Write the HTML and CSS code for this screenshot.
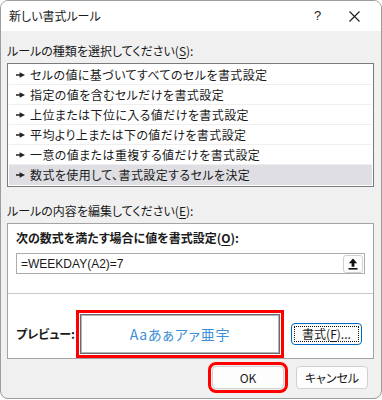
FILE: index.html
```html
<!DOCTYPE html>
<html lang="ja">
<head>
    <meta charset="UTF-8">
    <title>新しい書式ルール</title>
    <link rel="stylesheet" href="styles.css">
</head>
<body>
    <div class="dialog">
        <!-- Title bar -->
        <div class="titlebar">
            <span class="title">新しい書式ルール</span>
            <span class="help">?</span>
            <span class="close">
                <svg width="11" height="11" viewBox="0 0 11 11" fill="none" stroke="#1a1a1a" stroke-width="1.1">
                    <path d="M0.5 0.5l10 10M10.5 0.5l-10 10"/>
                </svg>
            </span>
        </div>

        <div class="dialog-body">
            <div class="label">ルールの種類を選択してください(<u>S</u>):</div>
            <ul class="rule-list">
                <li class="rule"><svg class="arrow" width="9" height="6" viewBox="0 0 9 6"><path d="M0 2.3h4v1.4H0z M3.6 0.2L9 3L3.6 5.8z"/></svg>セルの値に基づいてすべてのセルを書式設定</li>
                <li class="rule"><svg class="arrow" width="9" height="6" viewBox="0 0 9 6"><path d="M0 2.3h4v1.4H0z M3.6 0.2L9 3L3.6 5.8z"/></svg>指定の値を含むセルだけを書式設定</li>
                <li class="rule"><svg class="arrow" width="9" height="6" viewBox="0 0 9 6"><path d="M0 2.3h4v1.4H0z M3.6 0.2L9 3L3.6 5.8z"/></svg>上位または下位に入る値だけを書式設定</li>
                <li class="rule"><svg class="arrow" width="9" height="6" viewBox="0 0 9 6"><path d="M0 2.3h4v1.4H0z M3.6 0.2L9 3L3.6 5.8z"/></svg>平均より上または下の値だけを書式設定</li>
                <li class="rule"><svg class="arrow" width="9" height="6" viewBox="0 0 9 6"><path d="M0 2.3h4v1.4H0z M3.6 0.2L9 3L3.6 5.8z"/></svg>一意の値または重複する値だけを書式設定</li>
                <li class="rule selected"><svg class="arrow" width="9" height="6" viewBox="0 0 9 6"><path d="M0 2.3h4v1.4H0z M3.6 0.2L9 3L3.6 5.8z"/></svg>数式を使用して、書式設定するセルを決定</li>
            </ul>

            <div class="label label-second">ルールの内容を編集してください(<u>E</u>):</div>
            <div class="group">
                <div class="group-head">
                    <div class="bold-label">次の数式を満たす場合に値を書式設定(<u>O</u>):</div>
                    <div class="formula">
                        <span class="formula-text">=WEEKDAY(A2)=7</span>
                        <span class="ref-btn">
                            <svg width="10" height="12" viewBox="0 0 10 12">
                                <path d="M5 0.5L9.2 5.2H6.4V8.8H3.6V5.2H0.8Z" fill="#111"/>
                                <rect x="0.5" y="10" width="9" height="1.6" fill="#111"/>
                            </svg>
                        </span>
                    </div>
                </div>
                <div class="preview-row">
                    <span class="bold-label preview-label">プレビュー:</span>
                    <div class="preview marked">Aaあぁアァ亜宇</div>
                    <span class="btn btn-format"><span class="focus-rect">書式(<u>F</u>)...</span></span>
                </div>
            </div>

            <div class="actions">
                <span class="btn marked">OK</span>
                <span class="btn">キャンセル</span>
            </div>
        </div>
    </div>
</body>
</html>
```

FILE: styles.css
```css
* {
    margin: 0;
    padding: 0;
    box-sizing: border-box;
}

body {
    font-family: "Noto Sans CJK JP", "Noto Sans", sans-serif;
    font-size: 12px;
    line-height: 16px;
    color: #1a1a1a;
    background: #ffffff;
    font-feature-settings: "palt";
}

u {
    text-decoration-thickness: 1px;
    text-underline-offset: 2px;
}

.dialog {
    width: 382px;
    height: 399px;
    border: 1px solid #9d9d9d;
    border-radius: 8px;
    background: #f0f0f0;
    overflow: hidden;
}

/* Title bar */
.titlebar {
    height: 30px;
    background: #ffffff;
    display: flex;
    align-items: center;
    padding-left: 8px;
}

.title {
    flex: 1;
}

.help {
    font-family: "Liberation Sans", sans-serif;
    font-size: 13px;
    width: 12px;
    margin-right: 23px;
}

.close {
    display: flex;
    width: 11px;
    margin-right: 21px;
}

/* Body */
.dialog-body {
    padding: 12px 7px 0 6px;
}

.label-second {
    margin-top: 16px;
}

.rule-list {
    list-style: none;
    margin-top: 4px;
    background: #ffffff;
    border: 1px solid #7a7a7a;
    padding: 1px;
}

.rule {
    height: 20px;
    display: flex;
    align-items: center;
    padding-left: 7px;
    border-bottom: 1px solid #efefef;
    letter-spacing: 0.4px;
}

.rule:last-child {
    border-bottom: none;
}

.rule.selected {
    background: #dedee3;
}

.arrow {
    fill: #222;
    margin-right: 5px;
    flex-shrink: 0;
}

/* Rule editor group */
.group {
    margin-top: 4px;
    background: #ffffff;
    border: 1px solid #a3a3a3;
}

.group-head {
    padding: 6px 8px 19px;
    border-bottom: 1px solid #c9c9c9;
}

.bold-label {
    font-weight: bold;
}

.formula {
    margin-top: 7px;
    height: 21px;
    border: 1px solid #acacac;
    display: flex;
    align-items: center;
    justify-content: space-between;
    padding: 0 1px 0 4px;
}

.formula-text {
    font-family: "Liberation Sans", sans-serif;
    font-size: 12px;
}

.ref-btn {
    width: 20px;
    height: 18px;
    border: 1px solid #d0d0d0;
    border-radius: 3px;
    display: flex;
    align-items: center;
    justify-content: center;
    background: #fdfdfd;
}

.preview-row {
    display: flex;
    align-items: center;
    padding: 20px 8px 4px;
}

.preview-label {
    width: 64px;
}

.preview {
    width: 200px;
    height: 40px;
    border: 1px solid #6b6b6b;
    box-shadow: inset 0 0 0 1px #b4b4b4;
    display: flex;
    align-items: center;
    justify-content: center;
    color: #3d8fd8;
    font-size: 14px;
    letter-spacing: 0.8px;
}

/* Buttons */
.btn {
    width: 72px;
    height: 23px;
    display: flex;
    align-items: center;
    justify-content: center;
    background: #fdfdfd;
    border: 1px solid #d0d0d0;
    border-radius: 4px;
}

.btn-format {
    width: 71px;
    height: 22px;
    margin-left: 11px;
    border-color: #0067c0;
    padding: 2px;
}

.focus-rect {
    width: 100%;
    height: 100%;
    border: 1px dotted #111;
    display: flex;
    align-items: center;
    justify-content: center;
}

.actions {
    display: flex;
    justify-content: flex-end;
    gap: 12px;
    margin-top: 7px;
    padding-right: 6px;
}

/* Red annotation frames */
.marked {
    outline: 3px solid #ff0000;
    outline-offset: 1px;
}
```
